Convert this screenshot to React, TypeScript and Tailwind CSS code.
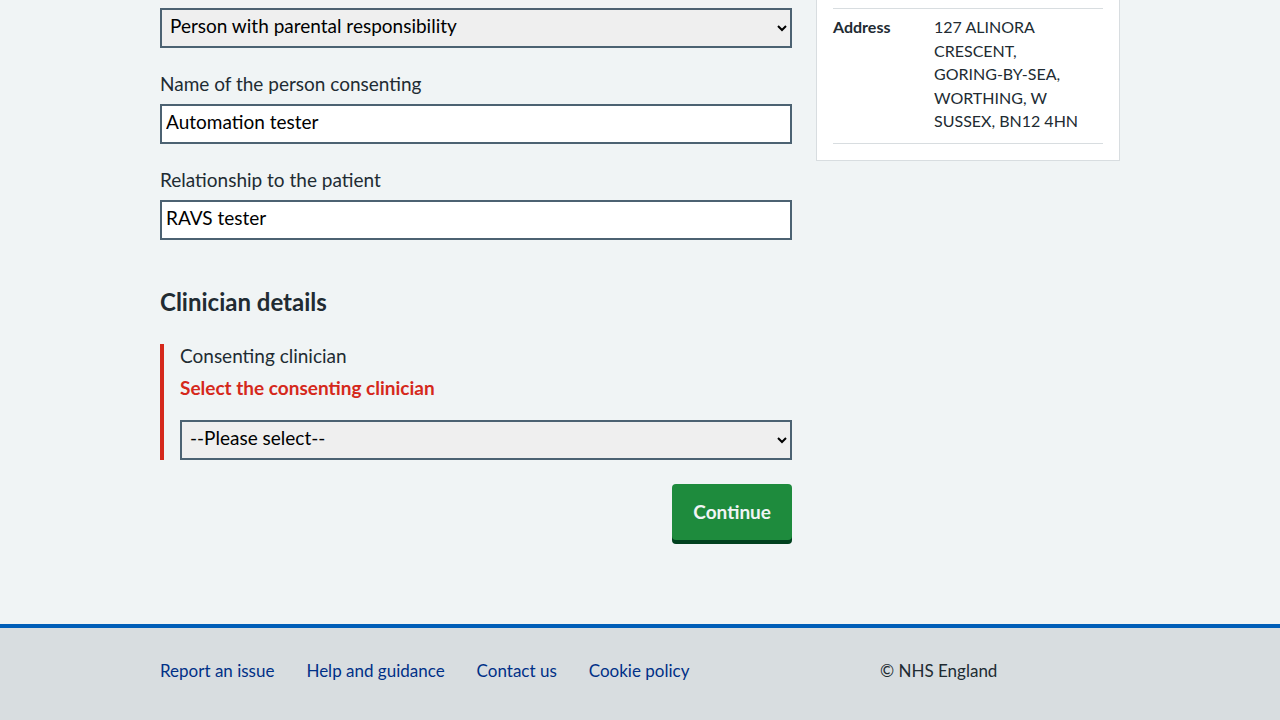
import React from 'react'

const font = { fontFamily: 'Lato, "Noto Sans", sans-serif' }

function Label({ children }: { children: React.ReactNode }) {
  return <label className="block text-[19px] leading-[28px] text-[#212b32] mb-[6px]">{children}</label>
}

function TextInput({ value }: { value: string }) {
  return (
    <input
      readOnly
      value={value}
      className="block w-full h-10 border-2 border-[#4c6272] bg-white px-1 pb-[5px] text-[19px] text-black outline-none"
    />
  )
}

function Select({ value }: { value: string }) {
  return (
    <select
      defaultValue={value}
      className="block w-full h-10 border-2 border-[#4c6272] bg-[#efefef] px-1 pb-[5px] text-[19px] text-black"
    >
      <option>{value}</option>
    </select>
  )
}

export default function App() {
  const links = ['Report an issue', 'Help and guidance', 'Contact us', 'Cookie policy']

  return (
    <div style={font} className="min-h-[720px] bg-[#f0f4f5] overflow-hidden">
      <main className="mx-auto w-[960px] flex gap-6 items-start pt-2">
        {/* Form column */}
        <div className="w-[632px]">
          <Select value="Person with parental responsibility" />

          <div className="mt-[22px]">
            <Label>Name of the person consenting</Label>
            <TextInput value="Automation tester" />
          </div>

          <div className="mt-[22px]">
            <Label>Relationship to the patient</Label>
            <TextInput value="RAVS tester" />
          </div>

          <h2 className="mt-[46px] text-[24px] leading-[32px] font-bold text-[#212b32]">Clinician details</h2>

          {/* Error group */}
          <div className="mt-[26px] border-l-4 border-[#d5281b] pl-4">
            <Label>
              <span className="block leading-[24px] -mb-[6px]">Consenting clinician</span>
            </Label>
            <p className="mt-[14px] text-[19px] leading-[24px] font-bold text-[#d5281b]">Select the consenting clinician</p>
            <div className="mt-5">
              <Select value="--Please select--" />
            </div>
          </div>

          <div className="mt-6 flex justify-end">
            <button className="h-[56px] px-[21px] rounded-[4px] bg-[#1e8b3d] text-[19px] font-bold text-[#f0f4f5] shadow-[0_4px_0_#00401e]">
              Continue
            </button>
          </div>
        </div>

        {/* Patient summary card */}
        <aside className="w-[304px] -mt-[17px] bg-white border border-[#d8dde0] px-4 pt-4 pb-4">
          <dl className="flex border-t border-b border-[#d8dde0] pt-[6px] pb-[10px] text-[16px] leading-[23.5px] text-[#212b32]">
            <dt className="w-[101px] font-bold">Address</dt>
            <dd className="flex-1 pr-4">127 ALINORA CRESCENT, GORING-BY-SEA, WORTHING, W SUSSEX, BN12 4HN</dd>
          </dl>
        </aside>
      </main>

      <footer className="mt-[84px] border-t-4 border-[#005eb8] bg-[#d8dde0] h-[110px]">
        <div className="mx-auto w-[960px] flex pt-[31px] text-[17px] leading-[24px]">
          <ul className="w-[720px] flex gap-8">
            {links.map((l) => (
              <li key={l}>
                <a href="#" className="text-[#003087]">{l}</a>
              </li>
            ))}
          </ul>
          <p className="text-[#212b32]">© NHS England</p>
        </div>
      </footer>
    </div>
  )
}
